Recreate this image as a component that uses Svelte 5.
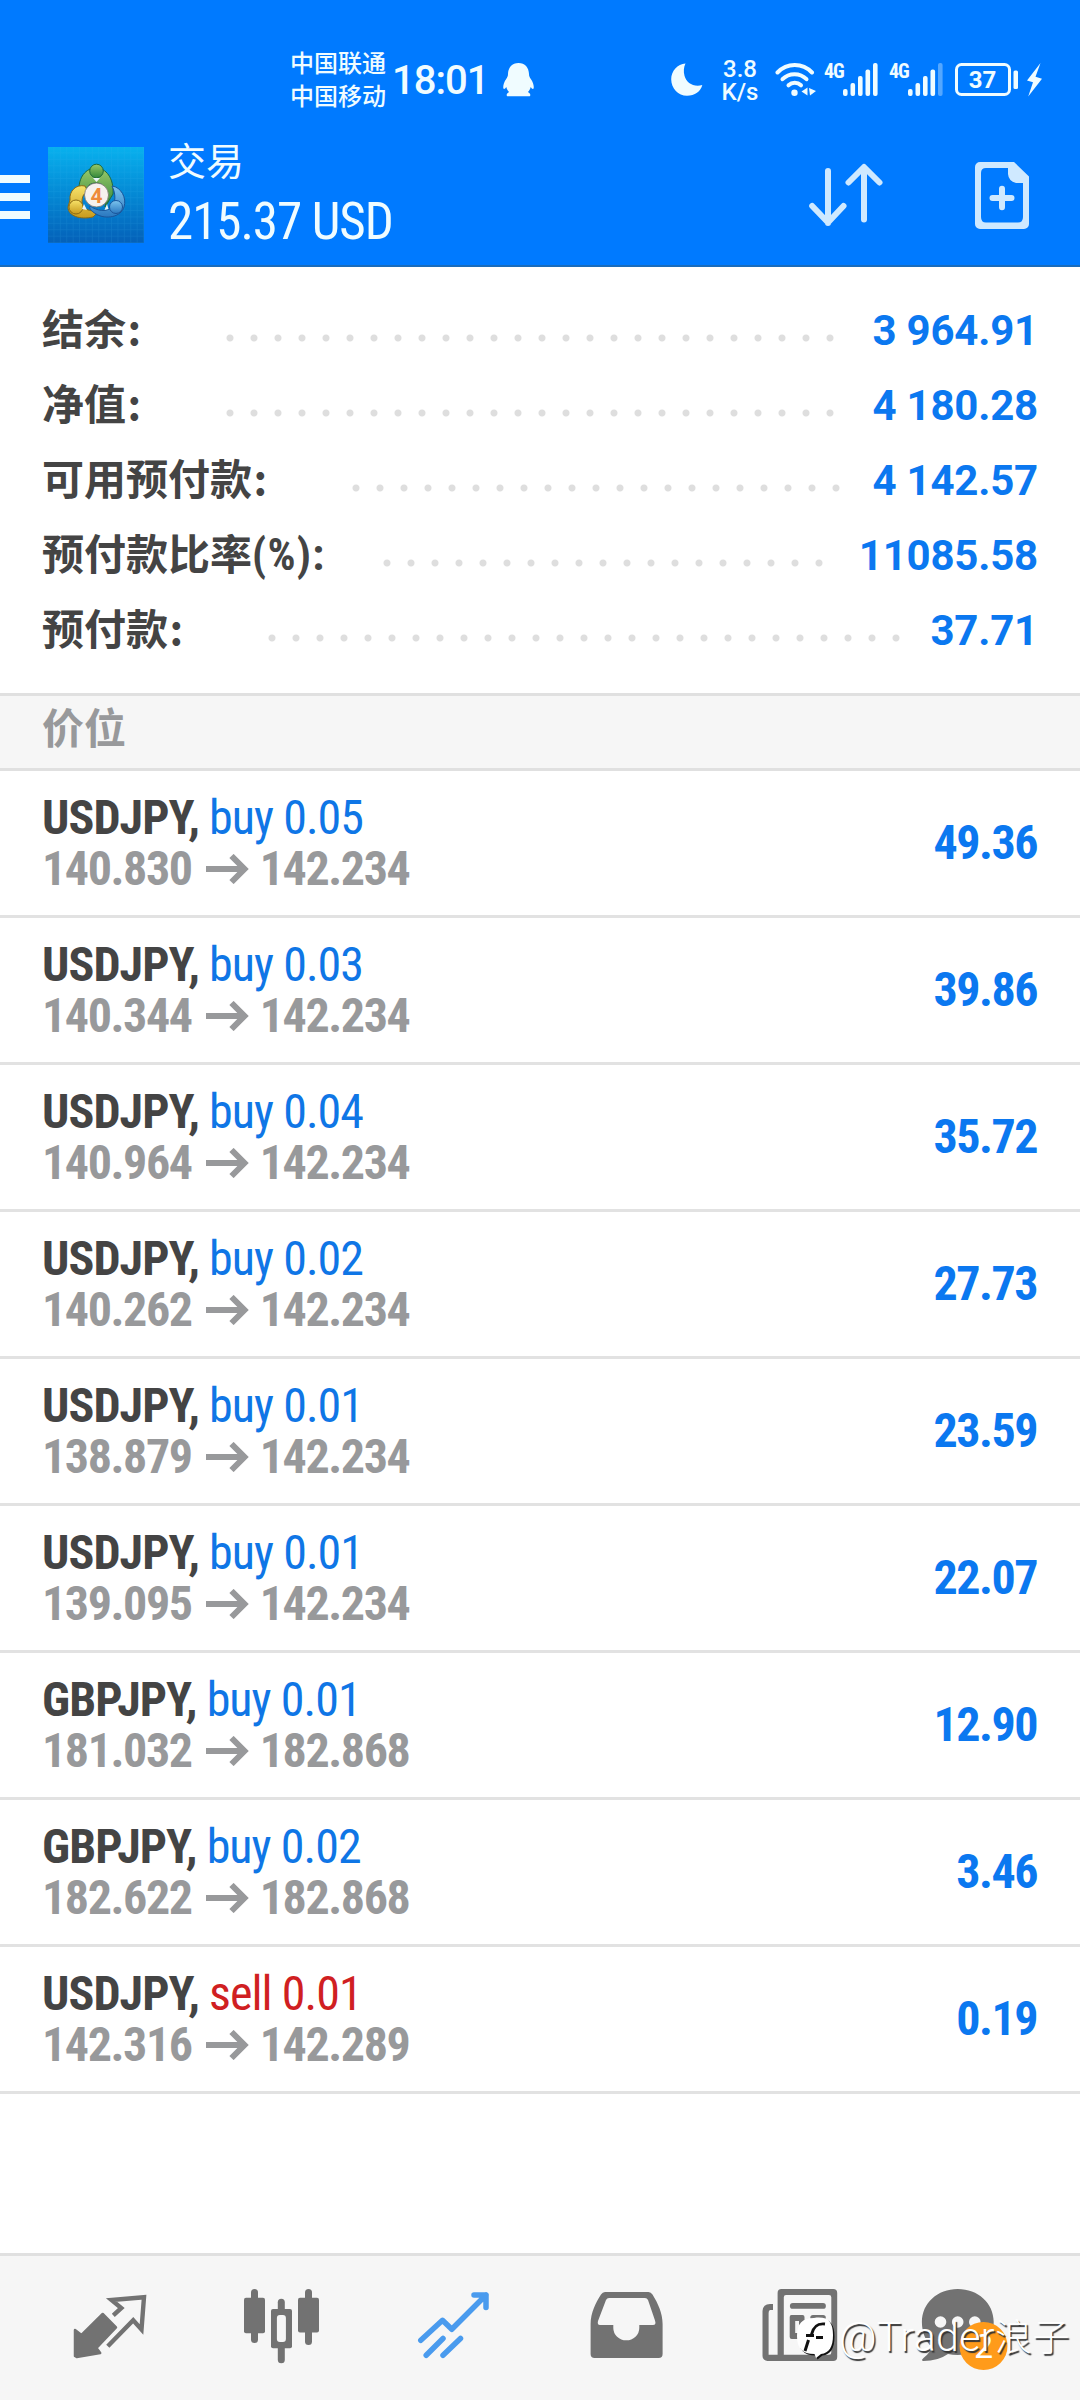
<script>
	const account = [
		{ label: '结余', suffix: ':', value: '3 964.91', dots: 26 },
		{ label: '净值', suffix: ':', value: '4 180.28', dots: 26 },
		{ label: '可用预付款', suffix: ':', value: '4 142.57', dots: 21 },
		{ label: '预付款比率', suffix: '(%):', value: '11085.58', dots: 19, latin: true },
		{ label: '预付款', suffix: ':', value: '37.71', dots: 27 }
	];

	const positions = [
		{ symbol: 'USDJPY', side: 'buy', lots: '0.05', open: '140.830', now: '142.234', profit: '49.36' },
		{ symbol: 'USDJPY', side: 'buy', lots: '0.03', open: '140.344', now: '142.234', profit: '39.86' },
		{ symbol: 'USDJPY', side: 'buy', lots: '0.04', open: '140.964', now: '142.234', profit: '35.72' },
		{ symbol: 'USDJPY', side: 'buy', lots: '0.02', open: '140.262', now: '142.234', profit: '27.73' },
		{ symbol: 'USDJPY', side: 'buy', lots: '0.01', open: '138.879', now: '142.234', profit: '23.59' },
		{ symbol: 'USDJPY', side: 'buy', lots: '0.01', open: '139.095', now: '142.234', profit: '22.07' },
		{ symbol: 'GBPJPY', side: 'buy', lots: '0.01', open: '181.032', now: '182.868', profit: '12.90' },
		{ symbol: 'GBPJPY', side: 'buy', lots: '0.02', open: '182.622', now: '182.868', profit: '3.46' },
		{ symbol: 'USDJPY', side: 'sell', lots: '0.01', open: '142.316', now: '142.289', profit: '0.19' }
	];

	// bar heights of the mobile signal icon
	const bars = [7, 13, 20, 26.5, 33];
	const sims = [5, 4];
</script>

<div class="screen">
	<header>
		<div class="status">
			<div class="carriers">
				<span>中国联通</span>
				<span>中国移动</span>
			</div>
			<span class="clock">18:01</span>
			<svg class="qq" width="31" height="34" viewBox="0 0 31 34" fill="currentColor">
				<path d="M15.5 0C9 0 5.2 4.6 5 11c0 2-.6 3.300-1.800 5C1 19 0 22.500.3 25c.3 2 1.800 1 3-.9.5 2 1.400 3.600 2.800 5-3 1.300-3 4.200-1.200 4.200h21.200c1.800 0 1.800-2.900-1.200-4.200 1.400-1.400 2.300-3 2.800-5 1.200 1.900 2.700 2.900 3 .9.3-2.500-.7-6-2.900-9-1.200-1.700-1.800-3-1.800-5C25.800 4.600 22 0 15.500 0z" />
			</svg>
			<div class="indicators">
				<svg class="moon" width="32" height="33" viewBox="0 0 32 33" fill="currentColor">
					<path d="M14.500.4C6.500 1 .2 7.800.2 16.300.2 25.500 7.300 32.800 16 32.800c7.700 0 13.900-4.600 15.300-10.800-8.700 2.500-16-2.300-17.800-9.300C12.400 8.300 12.700 4 14.500.4z" />
				</svg>
				<div class="speed">
					<span>3.8</span>
					<span>K/s</span>
				</div>
				<svg class="wifi" width="41" height="34" viewBox="0 0 41 34" fill="none" stroke="currentColor" stroke-width="4" stroke-linecap="round">
					<path d="M2.500 9.500C12 -.5 27.500 -.5 37 9.500" />
					<path d="M7.500 16.200C14 9.500 25 9.500 31.500 16.200" />
					<path d="M13.500 22.300C17 19 22.500 19 26 22.300" />
					<circle cx="19.500" cy="29.800" r="3.200" fill="currentColor" stroke="none" />
					<path d="M26.500 28.500l6-4v8zM34 25l7 3-6 4.500z" fill="currentColor" stroke="none" />
				</svg>
				{#each sims as level}
					<div class="sim">
						<span>4G</span>
						<svg width="36" height="33" viewBox="0 0 36 33" fill="currentColor">
							{#each bars as h, i}
								<rect x={i * 7.5} y={33 - h} width="4.600" height={h} rx="2" opacity={i < level ? 1 : 0.35} />
							{/each}
						</svg>
					</div>
				{/each}
				<svg class="battery" width="63" height="33" viewBox="0 0 63 33">
					<rect x="1.500" y="1.500" width="53" height="30" rx="5" fill="none" stroke="currentColor" stroke-width="3" />
					<rect x="58.500" y="7.500" width="4.500" height="18.500" rx="1.500" fill="currentColor" />
					<text x="27.500" y="24.800" text-anchor="middle" fill="currentColor">37</text>
				</svg>
				<svg class="bolt" width="15" height="34" viewBox="0 0 15 34" fill="currentColor">
					<path d="M13.500 0L0 17.500l6 1.700L1.200 33.500 15 15.800l-6.500-2z" />
				</svg>
			</div>
		</div>

		<div class="toolbar">
			<div class="menu">
				<i></i>
				<i></i>
				<i></i>
			</div>
			<svg class="logo" width="96" height="96" viewBox="0 0 96 96">
				<defs>
					<linearGradient id="sky" x1="0" y1="0" x2="0" y2="1">
						<stop offset="0" stop-color="#08b1ee" />
						<stop offset=".5" stop-color="#0488d4" />
						<stop offset="1" stop-color="#0460b8" />
					</linearGradient>
					<linearGradient id="green" x1="0" y1="0" x2="0" y2="1">
						<stop offset="0" stop-color="#9ac96a" />
						<stop offset="1" stop-color="#34883a" />
					</linearGradient>
					<linearGradient id="gold" x1="0" y1="0" x2="0" y2="1">
						<stop offset="0" stop-color="#f8e36a" />
						<stop offset="1" stop-color="#c79a1c" />
					</linearGradient>
					<linearGradient id="blue" x1="0" y1="0" x2="0" y2="1">
						<stop offset="0" stop-color="#7cc4ee" />
						<stop offset="1" stop-color="#2a78c0" />
					</linearGradient>
					<pattern id="grid" width="6.400" height="6.400" patternUnits="userSpaceOnUse">
						<path d="M6 0V6.400M0 6H6.400" stroke="#3fb4ee" stroke-width=".6" opacity=".2" />
					</pattern>
				</defs>
				<rect width="96" height="96" fill="url(#sky)" />
				<rect width="96" height="96" fill="url(#grid)" />
				<path d="M31 45c-1-15 7-24 17-24s18 10 17 26l-8 13c2-10 3-24-9-24-6 0-9 3-11 9z" fill="url(#green)" stroke="#1f6a3c" stroke-width="1" />
				<path d="M37 39c-9-2-16 5-15 14l-2 7c0 9 12 13 25 10l6-6c-9 1-17-2-17-9 0-6 2-9 6-10z" fill="url(#gold)" stroke="#8a6a14" stroke-width="1" />
				<path d="M64 39c9 1 15 12 12 21-3 10-18 13-28 7-5-3-7-6-6-8 7 5 16 6 21 2 5-5 5-14 1-22z" fill="url(#blue)" stroke="#1a559a" stroke-width="1" />
				<circle cx="48.500" cy="24" r="6.800" fill="url(#green)" stroke="#1f6a3c" />
				<circle cx="28" cy="60" r="7" fill="url(#gold)" stroke="#8a6a14" />
				<circle cx="68" cy="60" r="6.500" fill="url(#blue)" stroke="#1a559a" />
				<path d="M45 31l3.500 4 3.500-4zM36 57l-2 5 5 1zM59 57l1.500 5-4 1z" fill="#e8f4f8" />
				<circle cx="48.500" cy="48" r="12" fill="#f6f1ee" stroke="#77716a" stroke-width=".8" />
				<text x="48.500" y="55.500" text-anchor="middle">4</text>
			</svg>
			<div class="title">
				<span>交易</span>
				<strong>215.37 USD</strong>
			</div>
			<svg class="sort" width="74" height="66" viewBox="0 0 74 66" fill="none" stroke="currentColor" stroke-width="6" stroke-linecap="round" stroke-linejoin="round">
				<path d="M19 9v52M3.200 44L19 60.500 34.500 44" />
				<path d="M55 57.500V6M39.500 20.500L55 5 70.500 20.500" />
			</svg>
			<svg class="new" width="54" height="67" viewBox="0 0 54 67" fill="currentColor">
				<path fill-rule="evenodd" d="M5 0H39L54 14.500V62a5 5 0 0 1-5 5H5a5 5 0 0 1-5-5V5a5 5 0 0 1 5-5zM11 6Q6 6 6 11V55Q6 60.500 11 60.500H43Q48 60.500 48 55V21H41Q33.500 19 33 12V6z" />
				<path d="M27 26.800v18.500M17.500 36h19" fill="none" stroke="currentColor" stroke-width="6" stroke-linecap="round" />
			</svg>
		</div>
	</header>

	<section class="account">
		{#each account as row}
			<div class="line">
				<span class="label">{row.label}<span class="suffix" class:latin={row.latin}>{row.suffix}</span></span>
				<span class="dots" class:tight={row.latin} style="width: {row.dots * 24}px"></span>
				<span class="value">{row.value}</span>
			</div>
		{/each}
	</section>

	<h2>价位</h2>

	<main>
		{#each positions as p}
			<div class="position">
				<div>
					<div class="deal"><b>{p.symbol},</b> <span class={p.side}>{p.side} {p.lots}</span></div>
					<div class="prices">
						<span>{p.open}</span>
						<svg width="43" height="30" viewBox="0 0 43 30" fill="none" stroke="currentColor" stroke-width="6">
							<path d="M0 15H38M25.500 2L38.500 15 25.500 28" />
						</svg>
						<span>{p.now}</span>
					</div>
				</div>
				<span class="profit">{p.profit}</span>
			</div>
		{/each}
	</main>

	<nav>
		<svg viewBox="0 0 180 144">
			<path d="M75 74l6.500 5L102.700 58 116 71.500 96.500 92l3.700 5-23.500 4L75 100z" fill="currentColor" stroke="currentColor" stroke-width="2.500" stroke-linejoin="round" />
			<path d="M113.300 59.300L121.300 52 111.500 44 144 41.200 141.500 73.500 133.200 64.300 107.800 90.200" fill="none" stroke="currentColor" stroke-width="4.400" />
		</svg>
		<svg viewBox="0 0 180 144" fill="currentColor">
			<rect x="64" y="41.700" width="21" height="35.500" rx="2" />
			<rect x="71" y="33" width="7" height="54" rx="3.500" />
			<rect x="118" y="41.700" width="21" height="34.800" rx="2" />
			<rect x="125" y="33" width="7" height="56" rx="3.500" />
			<rect x="97.800" y="42.700" width="7" height="64.600" rx="3.500" />
			<rect x="91" y="53" width="21" height="39.300" rx="2" />
			<rect x="96.900" y="59" width="9" height="27" rx="3" fill="#f6f6f6" />
		</svg>
		<svg class="active" viewBox="0 0 180 144" fill="none" stroke="currentColor" stroke-width="5.500" stroke-linecap="round" stroke-linejoin="round">
			<path d="M60.800 84.300L82.500 64.300 91.800 73.300 126 39M114 39H126V51.500" />
			<path d="M83 82.500L66.200 99.300M100.500 82.500L83 99.300" />
		</svg>
		<svg viewBox="0 0 180 144" fill="currentColor">
			<path fill-rule="evenodd" d="M65 36H108.500Q111 36 112.500 38.500C118 47.500 122.600 57 122.600 68V98a4 4 0 0 1-4 4H54.600a4 4 0 0 1-4-4V68C50.600 57 56 46 61 38.500Q62.500 36 65 36zM69 42Q67 42 66 44L58 65Q57 69 60 69H73.300V72a13 12.300 0 0 0 26 0V69H113Q116.500 69 115 64.500L108 44Q107 42 105 42z" />
		</svg>
		<svg viewBox="0 0 180 144" fill="currentColor">
			<path fill-rule="evenodd" d="M61.500 33H113.200a4 4 0 0 1 4 4V101a4 4 0 0 1-4 4H47.500a5 5 0 0 1-5-5V55Q43 48 50 48H53V54H50Q48.600 54.500 48.600 57V98.800H57.600V37a4 4 0 0 1 3.900-4zM66 39Q63.800 39 63.800 41.200V98.800H109Q111.300 98.800 111.300 96.500V41.200Q111.300 39 109 39z" />
			<rect x="69.900" y="47" width="36" height="5.800" rx="2.900" />
			<path fill-rule="evenodd" d="M72 59H82.500a2 2 0 0 1 2 2V83H71.700a2 2 0 0 1-2-2V61a2 2 0 0 1 2.300-2zM75.200 65V77H79V65z" />
			<rect x="90.300" y="59" width="15.500" height="5.500" rx="2.700" />
		</svg>
		<svg viewBox="0 0 180 144" fill="currentColor">
			<path d="M57.700 33C78 33 93.700 47 93.700 66S78 99 57.700 99Q52.500 99 48 98Q38 105 23.500 105Q20.500 104.500 23.500 102Q31 96 31.500 91C25.500 85 21.900 76 21.900 66 21.900 47 37.500 33 57.700 33z" />
			<g fill="#f6f6f6">
				<circle cx="40.500" cy="66" r="5.800" />
				<circle cx="57.700" cy="66" r="5.800" />
				<circle cx="74.800" cy="66" r="5.800" />
			</g>
			<circle cx="83.500" cy="90" r="24" fill="#ff9b1a" />
			<text x="83.500" y="102" text-anchor="middle">2</text>
		</svg>
	</nav>

	<div class="watermark">
		<svg width="40" height="45" viewBox="0 0 40 45">
			<path d="M18 2C32 0 37 6 37 19 37 31 33 37 25 38L20 42 18.500 38C6 38 1 32 1 20 1 8 6 2 18 2z" fill="#111" transform="translate(1.500 1.500)" />
			<path d="M18 2C32 0 37 6 37 19 37 31 33 37 25 38L20 42 18.500 38C6 38 1 32 1 20 1 8 6 2 18 2z" fill="#fff" />
			<path d="M29 8C20 7 17 12 15.500 18.500M10 19.500H18M20 21.500H27M12.500 24L9 35" fill="none" stroke="#111" stroke-width="3" />
		</svg>
		<span>@Trader<em>浪子</em></span>
	</div>
</div>

<style>
	:global(body) {
		margin: 0;
		background: #fff;
	}

	.screen {
		position: relative;
		display: flex;
		flex-direction: column;
		width: 1080px;
		height: 2400px;
		overflow: hidden;
		background: #fff;
		color: #444;
		font-family: Roboto, "Noto Sans CJK SC", sans-serif;
	}

	svg {
		display: block;
		flex: none;
	}

	header {
		box-sizing: border-box;
		height: 267px;
		background: #007aff;
		border-bottom: 2px solid #1a6cbc;
		color: #f0fcff;
	}

	.status {
		display: flex;
		align-items: center;
		box-sizing: border-box;
		height: 130px;
		padding: 29px 38px 0 290px;
	}

	.carriers {
		display: flex;
		flex-direction: column;
		width: 102px;
		margin-top: -4px;
		font: 500 24px/33px "Noto Sans CJK SC", sans-serif;
		white-space: nowrap;
	}

	.clock {
		width: 111px;
		padding-top: 2px;
		font-size: 40px;
		letter-spacing: -1px;
		font-weight: 500;
	}

	.indicators {
		display: flex;
		align-items: center;
		margin-left: auto;
	}

	.speed {
		display: flex;
		flex-direction: column;
		align-items: center;
		width: 36px;
		margin: 3px 17px 0 19px;
		font: 500 24px/23px Roboto, sans-serif;
	}

	.sim {
		display: flex;
		width: 55px;
		margin-left: 8px;
	}

	.sim + .sim {
		margin-left: 10px;
	}

	.sim span {
		width: 19px;
		font: 700 20px/17px Roboto, sans-serif;
		font-stretch: 75%;
		letter-spacing: -1px;
	}

	.battery {
		margin: 0 9px 0 11px;
	}

	.battery text {
		font: 700 24px Roboto, sans-serif;
	}

	.toolbar {
		display: flex;
		align-items: center;
		height: 135px;
		padding-right: 51px;
	}

	.menu {
		display: flex;
		flex-direction: column;
		gap: 10px;
		width: 48px;
		margin-top: -2px;
	}

	.menu i {
		width: 30px;
		height: 8px;
		background: #f0fcff;
	}

	.logo {
		margin-top: -5px;
	}

	.logo text {
		font: 700 21px Roboto, sans-serif;
		fill: #ee8a3a;
	}

	.title {
		display: flex;
		flex-direction: column;
		margin: -4px 0 0 24px;
	}

	.title span {
		font: 400 38px/52px "Noto Sans CJK SC", sans-serif;
	}

	.title strong {
		font: 400 51px/74px Roboto, sans-serif;
		font-stretch: 75%;
		letter-spacing: -1.05px;
	}

	.sort {
		margin: -6px 92px 0 auto;
		color: #cfe9ff;
	}

	.new {
		margin-top: -4px;
		color: #cfe9ff;
	}

	.account {
		box-sizing: border-box;
		height: 426px;
		padding: 26px 42px 0;
	}

	.line {
		display: flex;
		align-items: center;
		height: 75px;
	}

	.label {
		margin-top: -8px;
		font: 700 42px/75px "Noto Sans CJK SC", sans-serif;
		white-space: nowrap;
	}

	.suffix {
		margin-left: 1.5px;
	}

	.latin {
		margin-left: 0;
		font-family: Roboto, sans-serif;
		font-size: 44px;
		line-height: 1;
		font-stretch: 75%;
		letter-spacing: 1.2px;
	}

	.dots {
		height: 8px;
		margin: 15px auto 0 77px;
		background: radial-gradient(circle at 12px 4px, #dedede 3px, transparent 4px) 0 0 / 24px 8px repeat-x;
	}

	.dots.tight {
		margin-left: 50px;
	}

	.value {
		color: #0b78f0;
		font-size: 42px;
		font-weight: 700;
		letter-spacing: -0.2px;
	}

	h2 {
		box-sizing: border-box;
		height: 78px;
		margin: 0;
		padding: 0 42px;
		border-top: 3px solid #e0e0e0;
		border-bottom: 3px solid #e0e0e0;
		background: #f6f6f6;
		color: #98999b;
		font: 700 42px/59px "Noto Sans CJK SC", sans-serif;
	}

	.position {
		display: flex;
		justify-content: space-between;
		align-items: center;
		height: 144px;
		padding: 0 43px 0 42px;
		border-bottom: 3px solid #e2e2e2;
		font-size: 48px;
		line-height: 51px;
		font-stretch: 75%;
	}

	.deal {
		letter-spacing: -0.95px;
	}

	.buy {
		color: #0f76e6;
	}

	.sell {
		color: #d01f22;
	}

	.prices {
		display: flex;
		align-items: center;
		color: #98999b;
		font-weight: 700;
		letter-spacing: -1.4px;
	}

	.prices svg {
		margin: 0 11px 0 14px;
	}

	.profit {
		margin-top: -2px;
		color: #0b78f0;
		font-weight: 700;
		letter-spacing: -1.5px;
	}

	nav {
		display: grid;
		grid-template-columns: repeat(6, 180px);
		height: 144px;
		margin-top: auto;
		border-top: 3px solid #e0e0e0;
		background: #f6f6f6;
		color: #727272;
	}

	nav .active {
		color: #4a9bee;
	}

	nav text {
		font: 400 34px Roboto, sans-serif;
		fill: #fff;
	}

	.watermark {
		position: absolute;
		left: 796px;
		top: 2310px;
		display: flex;
		align-items: center;
		gap: 3px;
		color: #fff;
		font: 300 41px/54px Roboto, "Noto Sans CJK SC", sans-serif;
		letter-spacing: 0.4px;
		text-shadow: 1.5px 1.5px 1px #333;
		white-space: nowrap;
	}

	.watermark em {
		font-size: 37px;
		font-style: normal;
	}
</style>
